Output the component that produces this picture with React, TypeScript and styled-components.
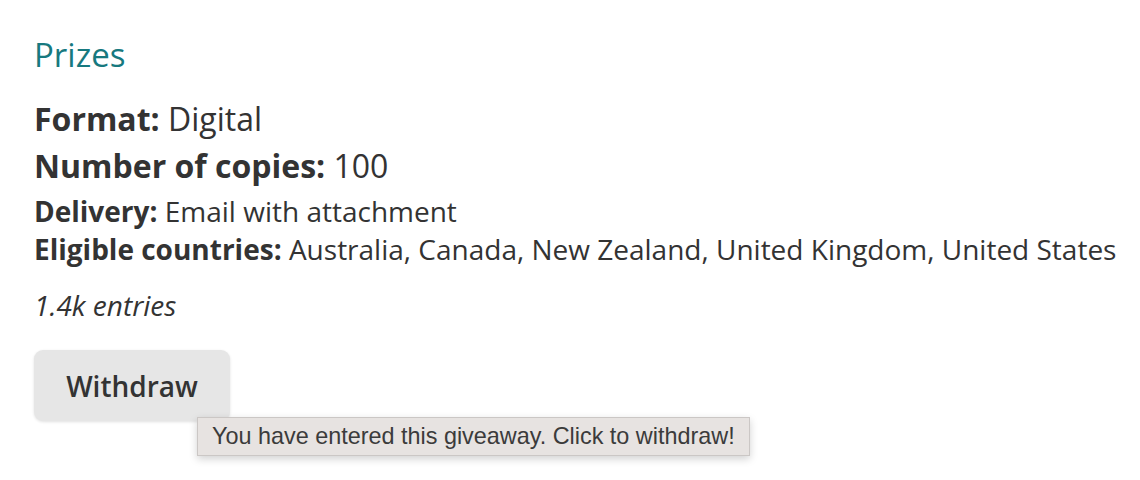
import React, { FC } from 'react'
import styled, { createGlobalStyle } from 'styled-components'

type Detail = {
	label: string
	value: string
}

const mainDetails: Detail[] = [
	{ label: 'Format:', value: 'Digital' },
	{ label: 'Number of copies:', value: '100' },
]

const minorDetails: Detail[] = [
	{ label: 'Delivery:', value: 'Email with attachment' },
	{
		label: 'Eligible countries:',
		value: 'Australia, Canada, New Zealand, United Kingdom, United States',
	},
]

const App: FC = () => {
	return (
		<>
			<GlobalStyle />
			<Section>
				<Heading>Prizes</Heading>
				<DetailGroup>
					{mainDetails.map(({ label, value }) => (
						<DetailRow key={label} $large>
							<Label>{label}</Label> {value}
						</DetailRow>
					))}
				</DetailGroup>
				<DetailGroup $gap={3}>
					{minorDetails.map(({ label, value }) => (
						<DetailRow key={label}>
							<Label>{label}</Label> {value}
						</DetailRow>
					))}
				</DetailGroup>
				<Entries>1.4k entries</Entries>
				<ButtonWrap>
					<WithdrawButton>Withdraw</WithdrawButton>
					<Tooltip>You have entered this giveaway. Click to withdraw!</Tooltip>
				</ButtonWrap>
			</Section>
		</>
	)
}

const GlobalStyle = createGlobalStyle`
	body {
		margin: 0;
		background: #ffffff;
		font-family: 'Open Sans', 'Noto Sans', sans-serif;
		color: #333333;
	}
`

const Section = styled.div`
	min-height: 480px;
	box-sizing: border-box;
	padding: 32px 34px 0;
	display: flex;
	flex-direction: column;
	align-items: flex-start;
`

const Heading = styled.h2`
	margin: 0;
	font-size: 33px;
	font-weight: 400;
	line-height: 45px;
	color: #17797f;
`

const DetailGroup = styled.div<{ $gap?: number }>`
	margin-top: ${({ $gap }) => ($gap === undefined ? 18 : $gap)}px;
	display: flex;
	flex-direction: column;
`

const DetailRow = styled.div<{ $large?: boolean }>`
	font-size: ${({ $large }) => ($large ? '32px' : '28px')};
	line-height: ${({ $large }) => ($large ? '47px' : '38px')};
	white-space: nowrap;
`

const Label = styled.strong`
	font-weight: 700;
`

const Entries = styled.div`
	margin-top: 18px;
	font-size: 28px;
	line-height: 38px;
	font-style: italic;
`

const ButtonWrap = styled.div`
	position: relative;
	margin-top: 26px;
`

const WithdrawButton = styled.button`
	display: block;
	width: 196px;
	height: 71px;
	border: none;
	border-radius: 9px;
	background: #e6e6e6;
	box-shadow: 0 1px 3px rgba(0, 0, 0, 0.12);
	font-family: 'Open Sans', 'Noto Sans', sans-serif;
	font-size: 28px;
	font-weight: 600;
	color: #333333;
	cursor: pointer;
`

const Tooltip = styled.div`
	position: absolute;
	left: 163px;
	top: 67px;
	padding: 0 14px;
	height: 37px;
	display: flex;
	align-items: center;
	white-space: nowrap;
	background: #e7e3e1;
	border: 1px solid #cbc7c5;
	box-shadow: 0 3px 8px rgba(0, 0, 0, 0.18);
	font-family: 'Liberation Sans', Arial, sans-serif;
	font-size: 23.4px;
	color: #3b3b3b;
`

export default App
